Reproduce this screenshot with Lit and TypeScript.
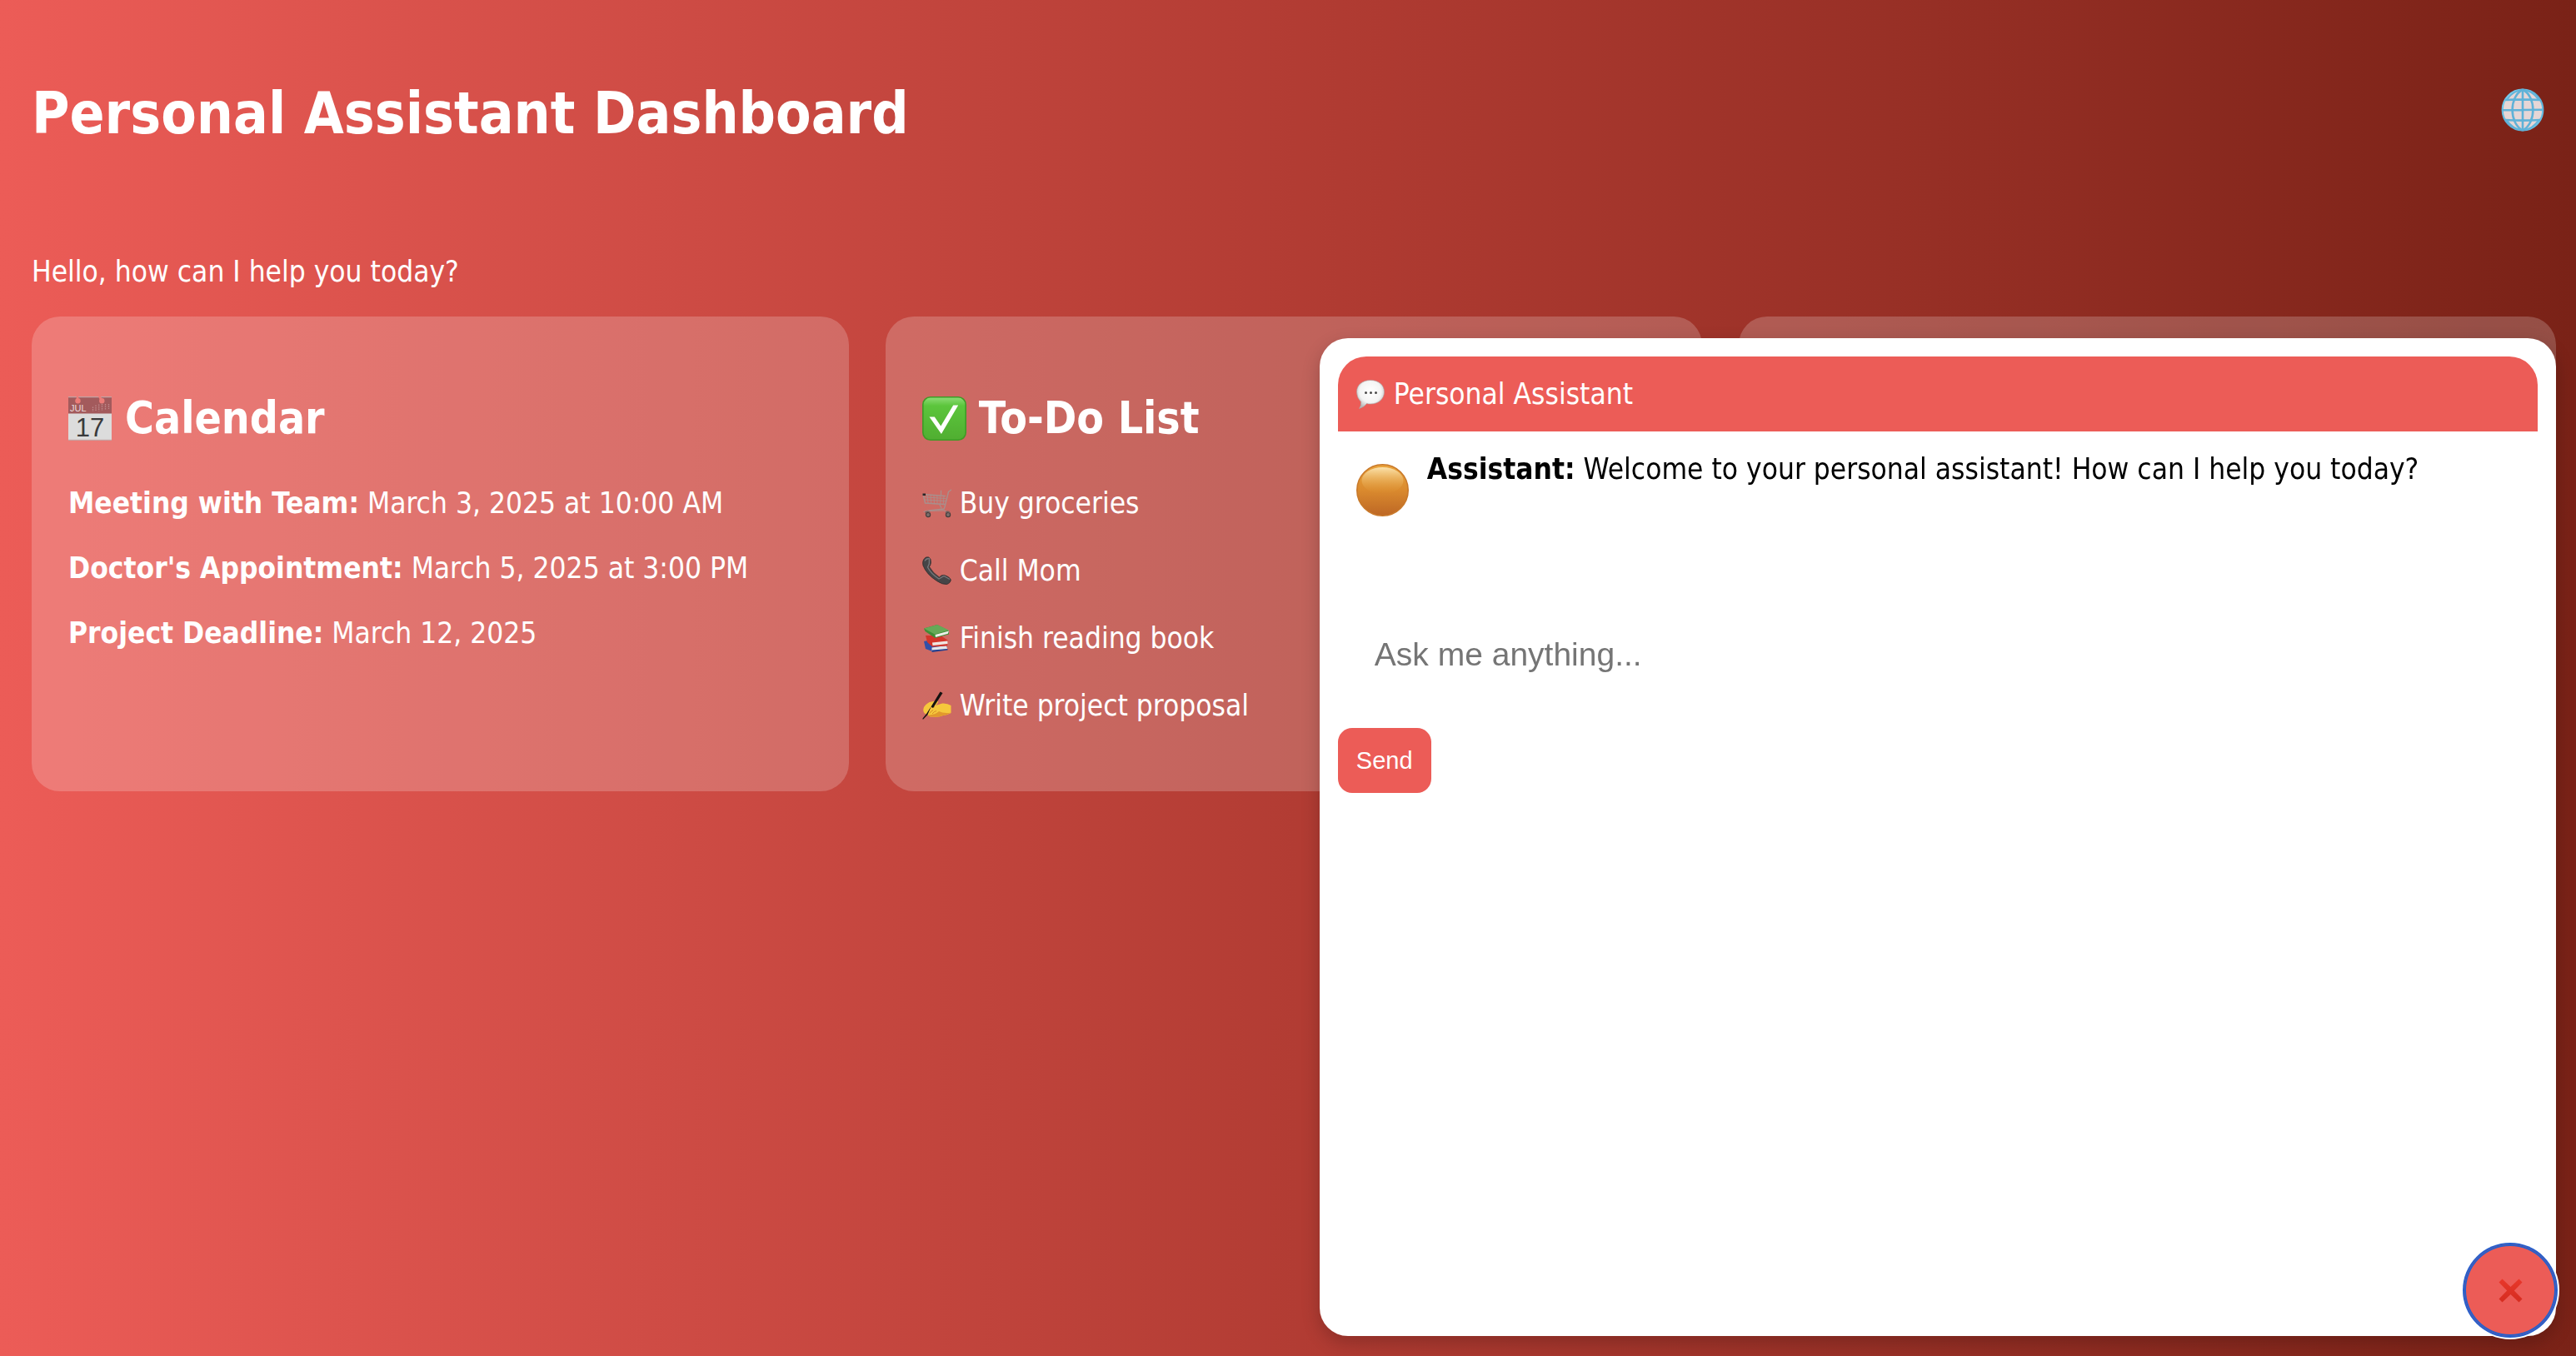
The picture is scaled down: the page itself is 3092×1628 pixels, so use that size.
import { LitElement, html, css, svg } from "lit";
import { customElement, state } from "lit/decorators.js";

const globe = svg`
  <defs>
    <linearGradient id="gl" x1="0" y1="0" x2="1" y2="1">
      <stop offset="0" stop-color="#7fd6f5" /><stop offset="0.5" stop-color="#5aaed6" /><stop offset="1" stop-color="#6cc4e8" />
    </linearGradient>
  </defs>
  <circle cx="26" cy="26" r="24.6" fill="#e6d6d6" />
  <g fill="none" stroke="#5fb2d8" stroke-width="2.6">
    <circle cx="26" cy="26" r="24.3" stroke="url(#gl)" stroke-width="2.2" />
    <path d="M26 1.5v49M1.5 26.2l49-.4M5 14Q26 12.800 47 14M5 38Q26 39.200 47 38" />
    <path d="M26 1.500C9.500 10 9.500 42 26 50.500M26 1.500C42.500 10 42.500 42 26 50.500" />
    <path d="M24 2Q14 4 7.500 13M28 2Q38 4 44.500 13M24 50Q14 48 7.500 39M28 50Q38 48 44.500 39" stroke-width="1.6" />
  </g>`;

const calendar = svg`
  <path d="M0 0H52V53H0Z" fill="#dcdcdc" />
  <path d="M0 0H52V20.500H0Z" fill="#a35a5c" />
  <path d="M0 0H52V1.200H0ZM0 51.800H52V53H0Z" fill="#c4a3a3" />
  <path d="M9.800 0h2.400v3h-2.400ZM36 0h3l2 4h-3Z" fill="#ee7c78" />
  <circle cx="11.500" cy="5.300" r="3.200" fill="#ee7c78" /><circle cx="40.300" cy="5.300" r="3.200" fill="#ee7c78" />
  <g stroke="#c08a8b" stroke-width="1.300" stroke-dasharray="1.500 1">
    <path d="M29.500 12.500v5.500M33 10.500v7.500M36.700 9.500v8M40.500 9v8M44.500 9v7M48.500 9v6" />
  </g>
  <text x="2" y="17.500" font-family="Liberation Sans, sans-serif" font-size="11" font-weight="400" fill="#ecdcdc">JUL</text>
  <text x="26" y="47.500" text-anchor="middle" font-family="Liberation Sans, sans-serif" font-size="31" font-weight="400" fill="#3a3a3c">17</text>`;

const check = svg`
  <defs>
    <linearGradient id="ck" x1="0" y1="0" x2="0" y2="1">
      <stop offset="0" stop-color="#8fdd78" /><stop offset="0.2" stop-color="#5cc53c" /><stop offset="1" stop-color="#50ae31" />
    </linearGradient>
  </defs>
  <rect x="0.800" y="0.800" width="51.400" height="51.400" rx="9" fill="url(#ck)" stroke="#3f9a26" stroke-width="1.600" />
  <path d="M8.500 24.500h6.300L22.300 35.500 37.200 10.500H43.200L22.900 45Z" fill="#fff" />`;

const cart = svg`
  <g fill="none" stroke="#a98f8c" stroke-linecap="round">
    <path d="M1 6.500 27.500 8.500M1.200 7 3.500 17 27 18.500M35 1 31.500 3.500 27 21.500 26 24 8 26" stroke-width="1.400" />
    <path d="M2 9.800 28 11.500M2.600 13 27.500 14.500M6 7l1 10.200M10 7.200l.7 10.300M14 7.500l.4 10.300M18 7.800v10.200M22 8l-.3 10.300M26 8.400l-.8 10" stroke-width="0.900" />
    <path d="M22.500 2v5M21 19l2 4M2 27.500 5 26.300 26 25.800 30 28" stroke-width="1.200" />
  </g>
  <path d="M0.500 5.500h3.500v2.500h-3.500Z" fill="#2b2424" />
  <g fill="#7b6d6b" stroke="#463c3b" stroke-width="1.200"><circle cx="7" cy="31" r="2.600" /><circle cx="31" cy="31" r="2.600" /></g>
  <path d="M3.500 28.500Q7 26 9 28.500M28 28.500Q31 26 33 29" fill="none" stroke="#6d5f5d" stroke-width="1.600" />`;

const phone = svg`
  <path d="M1.500 4Q4-.5 8 1 11 3 10.300 8 9.800 11 8.500 12.500 13 20.500 20.500 25 22.500 22 26.500 22.500 33 24.500 34.300 28 34 32 29.500 33.500 24 34 17.500 29.500 5 21.500 1 11 0 7 1.500 4Z" fill="#454547" stroke="#2d2b2c" stroke-width="0.800" />
  <path d="M3 5.500Q5 2 8.500 2.500L8.300 9 6.500 13Q10.500 21 20 27L26 23.500 33 27.500" fill="none" stroke="#77777a" stroke-width="1.400" />`;

const books = svg`
  <path d="M2 21 21 17 30 27.500 12 33 4 30Z" fill="#3150a8" />
  <path d="M11.500 28.500 29 26 30 30 11.500 33Z" fill="#e4e6ea" />
  <path d="M11.500 31.500 30.500 30V31.500L11.500 34Z" fill="#23408f" />
  <path d="M4 14 22 14 31 20 30 26.500 12 27.500 6 22Z" fill="#d3352b" />
  <path d="M12 22.500 30.500 20.500 30.500 24 12.500 26Z" fill="#efe6e2" />
  <path d="M2 5.500 18 1 32 8.500 32 12.500 15.500 17 3.500 9Z" fill="#3f8c35" />
  <path d="M2 5.500 18 1 32 7.500 15 12.500Z" fill="#66a957" />
  <path d="M15.500 13 32 8.500 30.800 11.800 16 16Z" fill="#eef0ea" />`;

const writing = svg`
  <path d="M2 19Q6 13 11 12.500L17 11Q20 11 18.500 14L16 17 24 14.500Q30 14 34.500 17V26Q30 28.500 25 29 20 31.500 13 30.500 8 31 7 28.500L3 26.500Q0 24 2 19Z" fill="#f6c83c" />
  <path d="M7 28.500Q16 28 20 24 26 27 34.500 25.500 28 29 25 29 20 31.500 13 30.500 8 31 7 28.500Z" fill="#e2992c" />
  <path d="M8 22Q11 18 15 18.500M12 27q2-3 5-3.500M9 26.500q1.500-3 4-4" fill="none" stroke="#d98e26" stroke-width="1" />
  <path d="M21.500.5 24.500 2 13 20 10.500 18.500ZM10.500 18.500 5 27 .5 32.500.8 34 6.500 28Z" fill="#141210" />`;

const bubble = svg`
  <defs>
    <radialGradient id="bb" cx="0.500" cy="0.400" r="0.600">
      <stop offset="0" stop-color="#fff" /><stop offset="0.650" stop-color="#f4f4f4" /><stop offset="1" stop-color="#b9b9b9" />
    </radialGradient>
  </defs>
  <path d="M17 .5C26.500.5 33.500 6 33.500 14.500S26.500 29 17 29Q14.500 29 12.500 28.500 9 33 3.500 34.500 6 31 5.700 26.500.5 21.500.5 14.500C.5 6 7.500.5 17 .5Z" fill="url(#bb)" stroke="#a9a3a3" stroke-width="0.600" />
  <g fill="#4a4a4a"><circle cx="11.500" cy="15.500" r="1.500" /><circle cx="17.500" cy="15.500" r="1.500" /><circle cx="23.500" cy="15.500" r="1.500" /></g>`;

const orb = svg`
  <defs>
    <linearGradient id="ob" x1="0" y1="0" x2="0" y2="1">
      <stop offset="0" stop-color="#eaa43c" /><stop offset="0.500" stop-color="#da8a2e" /><stop offset="1" stop-color="#bd6725" />
    </linearGradient>
    <linearGradient id="os" x1="0" y1="0" x2="0" y2="1">
      <stop offset="0" stop-color="#fbe2ac" /><stop offset="1" stop-color="#e19a35" stop-opacity="0" />
    </linearGradient>
  </defs>
  <circle cx="31.500" cy="31.500" r="30.700" fill="url(#ob)" stroke="#c9792a" stroke-width="1.600" />
  <ellipse cx="31.500" cy="20" rx="25" ry="16" fill="url(#os)" />`;

const cross = svg`
  <defs>
    <linearGradient id="cr" x1="0" y1="0" x2="0" y2="1">
      <stop offset="0" stop-color="#e8372a" /><stop offset="1" stop-color="#d52c20" />
    </linearGradient>
  </defs>
  <path d="M4.500.5 14.500 10 24.500.5 28.500 4.500 18.800 14.500 28.500 24.500 24.500 28.500 14.500 19 4.500 28.500.5 24.500 10.200 14.500.5 4.500Z" fill="url(#cr)" />`;

@customElement("app-root")
export class AppRoot extends LitElement {
  @state() private open = true;

  private events = [
    { name: "Meeting with Team:", when: "March 3, 2025 at 10:00 AM" },
    { name: "Doctor's Appointment:", when: "March 5, 2025 at 3:00 PM" },
    { name: "Project Deadline:", when: "March 12, 2025" },
  ];

  private todos = [
    { icon: cart, text: "Buy groceries" },
    { icon: phone, text: "Call Mom" },
    { icon: books, text: "Finish reading book" },
    { icon: writing, text: "Write project proposal" },
  ];

  static styles = css`
    :host {
      display: block;
      box-sizing: border-box;
      min-height: 100vh;
      padding: 94px 24px 24px 38px;
      background: linear-gradient(to right, #ec5c57, #b03b32 52%, #7a2217);
      color: #fff;
      font-family: Tahoma, "DejaVu Sans Condensed", "DejaVu Sans", sans-serif;
      font-size: 35px;
      line-height: 44px;
    }
    * {
      box-sizing: border-box;
    }
    h1, h2, p, ul {
      margin: 0;
      padding: 0;
    }
    svg {
      display: block;
      flex: none;
    }
    button {
      border: none;
      padding: 0;
      cursor: pointer;
    }
    .top {
      display: flex;
      justify-content: space-between;
      align-items: center;
      padding-right: 14px;
    }
    h1 {
      font-size: 69px;
      line-height: 84px;
    }
    .language {
      background: none;
      padding-bottom: 8px;
    }
    .greeting {
      margin-top: 126px;
    }
    .cards {
      display: grid;
      grid-template-columns: repeat(3, 1fr);
      gap: 44px;
      margin-top: 32px;
    }
    .card {
      padding: 44px;
      border-radius: 34px;
      background: rgba(255, 255, 255, 0.2);
    }
    h2 {
      display: flex;
      align-items: center;
      gap: 15px;
      margin: 46px 0 48px;
      font-size: 53px;
      line-height: 64px;
    }
    .event {
      margin-bottom: 34px;
    }
    .todo {
      display: flex;
      align-items: center;
      gap: 10px;
      margin-bottom: 37px;
    }
    .panel {
      position: fixed;
      top: 406px;
      right: 24px;
      bottom: 24px;
      width: 48vw;
      padding: 22px;
      border-radius: 34px;
      background: #fff;
      color: #000;
      box-shadow: 0 8px 22px rgba(0, 0, 0, 0.2);
    }
    .title {
      display: flex;
      align-items: center;
      gap: 10px;
      min-height: 90px;
      padding: 0 22px;
      border-radius: 34px 34px 0 0;
      background: #ec5c57;
      color: #fff;
    }
    .messages {
      min-height: 201px;
      padding: 23px 22px;
    }
    .message {
      display: flex;
      gap: 22px;
    }
    .avatar {
      margin-top: 16px;
    }
    .ask {
      display: block;
      width: 100%;
      height: 133px;
      padding: 0 44px;
      border: none;
      background: none;
      color: #000;
      font: 39px "Liberation Sans", sans-serif;
    }
    .ask::placeholder {
      color: #757575;
    }
    .send {
      height: 78px;
      margin-top: 22px;
      padding: 0 22px;
      border-radius: 17px;
      background: #ec5c57;
      color: #fff;
      font: 29px "Liberation Sans", sans-serif;
    }
    .toggle {
      position: fixed;
      right: 24px;
      bottom: 24px;
      display: grid;
      place-items: center;
      width: 110px;
      height: 110px;
      border-radius: 50%;
      background: #ec5c57;
      box-shadow: inset 0 0 0 2px #275fcb, 0 0 0 2px #275fcb, 0 0 0 4px #fff;
    }
  `;

  private icon(body: unknown, w: number, h: number, cls = "") {
    return html`<svg class=${cls} width=${w} height=${h} viewBox="0 0 ${w} ${h}" aria-hidden="true">${body}</svg>`;
  }

  private toggle() {
    this.open = !this.open;
  }

  render() {
    return html`
      <header class="top">
        <h1>Personal Assistant Dashboard</h1>
        <button class="language" aria-label="Language">${this.icon(globe, 52, 52)}</button>
      </header>
      <main>
        <p class="greeting">Hello, how can I help you today?</p>
        <div class="cards">
          <section class="card">
            <h2>${this.icon(calendar, 53, 53)}Calendar</h2>
            ${this.events.map((e) => html`<p class="event"><strong>${e.name}</strong> ${e.when}</p>`)}
          </section>
          <section class="card">
            <h2>${this.icon(check, 53, 53)}To-Do List</h2>
            <ul>
              ${this.todos.map((t) => html`<li class="todo">${this.icon(t.icon, 35, 35)}<span>${t.text}</span></li>`)}
            </ul>
          </section>
          <section class="card"></section>
        </div>
      </main>
      ${this.open
        ? html`<aside class="panel">
            <div class="title">${this.icon(bubble, 35, 35)}<span>Personal Assistant</span></div>
            <div class="messages">
              <div class="message">
                ${this.icon(orb, 63, 63, "avatar")}
                <p><strong>Assistant:</strong> Welcome to your personal assistant! How can I help you today?</p>
              </div>
            </div>
            <input class="ask" type="text" placeholder="Ask me anything..." aria-label="Ask me anything" />
            <button class="send">Send</button>
          </aside>`
        : null}
      <button class="toggle" aria-label="Close" @click=${this.toggle}>${this.icon(cross, 29, 29)}</button>
    `;
  }
}
